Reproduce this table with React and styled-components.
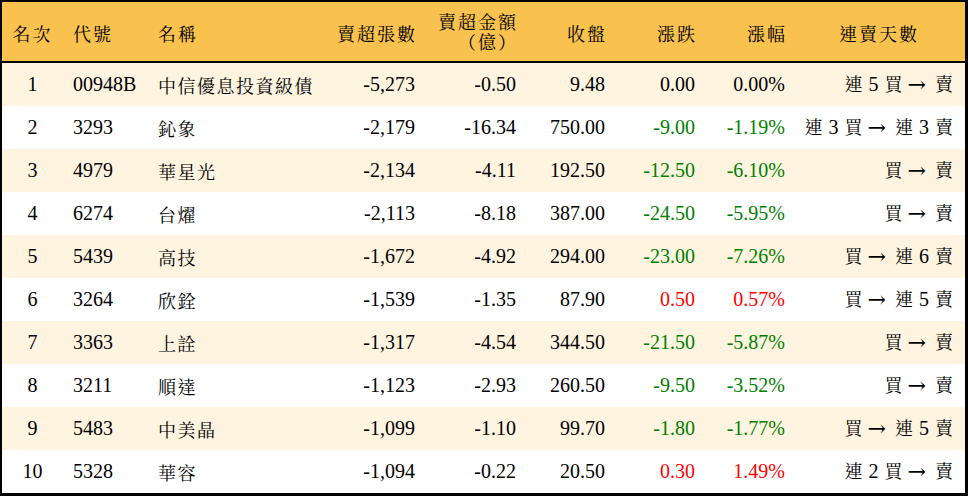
import React from "react";
import styled, { createGlobalStyle } from "styled-components";

const GlobalStyle = createGlobalStyle`
  html, body { margin: 0; padding: 0; background: #ffffff; }
  body {
    font-family: "Liberation Serif", "Noto Serif CJK TC", "Noto Sans CJK TC", serif;
    color: #000;
  }
`;

const COLS = "61px 85px 170px 107px 101px 89px 90px 90px 170px";

const Table = styled.div`
  width: 968px;
  height: 496px;
  box-sizing: border-box;
  border-style: solid;
  border-color: #000;
  border-width: 2px 3px 3px 2px;
  display: flex;
  flex-direction: column;
`;

const HeaderRow = styled.div`
  display: grid;
  grid-template-columns: ${COLS};
  height: 61px;
  box-sizing: border-box;
  background: #f9c14d;
  border-bottom: 2px solid #000;
`;

const Row = styled.div`
  display: grid;
  grid-template-columns: ${COLS};
  height: 43px;
  background: ${(p) => (p.$striped ? "#fef4e0" : "#ffffff")};
`;

const Cell = styled.div`
  display: flex;
  align-items: center;
  justify-content: ${(p) =>
    p.$align === "center" ? "center" : p.$align === "left" ? "flex-start" : "flex-end"};
  padding: 0 ${(p) => (p.$last ? "12px" : "10px")} 0 10px;
  font-size: 20px;
  white-space: nowrap;
  color: ${(p) => (p.$tone === "up" ? "#ff0000" : p.$tone === "down" ? "#008000" : "#000")};
`;

const HeadCell = styled(Cell)`
  padding-top: 3px;
`;

const HeadStack = styled.div`
  display: flex;
  flex-direction: column;
  align-items: flex-end;
  line-height: 20px;
`;

const HeadText = styled.span`
  font-size: 18px;
  letter-spacing: 2px;
  margin-right: ${(p) => (p.$trim ? "-2px" : "0")};
`;

const NameText = styled.span`
  font-size: 18px;
  letter-spacing: 1.5px;
`;

const Seq = styled.span`
  display: inline-flex;
  align-items: center;
  white-space: pre;
  word-spacing: 1px;
`;

const SeqCjk = styled.span`
  font-size: 18px;
  line-height: 1;
`;

const SeqArrow = styled.span`
  font-family: "DejaVu Serif", serif;
  font-size: 22px;
  line-height: 1;
  margin: 0 3px 0 -1px;
`;

const rows = [
  ["1", "00948B", "中信優息投資級債", "-5,273", "-0.50", "9.48", "0.00", "0.00%", "連 5 買 → 賣"],
  ["2", "3293", "鈊象", "-2,179", "-16.34", "750.00", "-9.00", "-1.19%", "連 3 買 → 連 3 賣"],
  ["3", "4979", "華星光", "-2,134", "-4.11", "192.50", "-12.50", "-6.10%", "買 → 賣"],
  ["4", "6274", "台燿", "-2,113", "-8.18", "387.00", "-24.50", "-5.95%", "買 → 賣"],
  ["5", "5439", "高技", "-1,672", "-4.92", "294.00", "-23.00", "-7.26%", "買 → 連 6 賣"],
  ["6", "3264", "欣銓", "-1,539", "-1.35", "87.90", "0.50", "0.57%", "買 → 連 5 賣"],
  ["7", "3363", "上詮", "-1,317", "-4.54", "344.50", "-21.50", "-5.87%", "買 → 賣"],
  ["8", "3211", "順達", "-1,123", "-2.93", "260.50", "-9.50", "-3.52%", "買 → 賣"],
  ["9", "5483", "中美晶", "-1,099", "-1.10", "99.70", "-1.80", "-1.77%", "買 → 連 5 賣"],
  ["10", "5328", "華容", "-1,094", "-0.22", "20.50", "0.30", "1.49%", "連 2 買 → 賣"],
];

const toneOf = (v) => {
  const n = parseFloat(v);
  if (n > 0) return "up";
  if (n < 0) return "down";
  return "flat";
};

function Streak({ text }) {
  const parts = text.split(/(→|[\u4e00-\u9fff]+)/).filter((s) => s !== "");
  return (
    <Seq>
      {parts.map((p, i) => {
        if (p === "→") return <SeqArrow key={i}>→</SeqArrow>;
        if (/[\u4e00-\u9fff]/.test(p)) return <SeqCjk key={i}>{p}</SeqCjk>;
        return <span key={i}>{p}</span>;
      })}
    </Seq>
  );
}

export default function App() {
  return (
    <>
      <GlobalStyle />
      <Table>
        <HeaderRow>
          <HeadCell $align="center"><HeadText>名次</HeadText></HeadCell>
          <HeadCell $align="left"><HeadText>代號</HeadText></HeadCell>
          <HeadCell $align="left"><HeadText>名稱</HeadText></HeadCell>
          <HeadCell><HeadText $trim>賣超張數</HeadText></HeadCell>
          <HeadCell>
            <HeadStack>
              <HeadText $trim>賣超金額</HeadText>
              <HeadText $trim>（億）</HeadText>
            </HeadStack>
          </HeadCell>
          <HeadCell><HeadText $trim>收盤</HeadText></HeadCell>
          <HeadCell><HeadText $trim>漲跌</HeadText></HeadCell>
          <HeadCell><HeadText $trim>漲幅</HeadText></HeadCell>
          <HeadCell $align="center" $last><HeadText>連賣天數</HeadText></HeadCell>
        </HeaderRow>
        {rows.map((r, i) => (
          <Row key={r[0]} $striped={i % 2 === 0}>
            <Cell $align="center">{r[0]}</Cell>
            <Cell $align="left">{r[1]}</Cell>
            <Cell $align="left"><NameText>{r[2]}</NameText></Cell>
            <Cell>{r[3]}</Cell>
            <Cell>{r[4]}</Cell>
            <Cell>{r[5]}</Cell>
            <Cell $tone={toneOf(r[6])}>{r[6]}</Cell>
            <Cell $tone={toneOf(r[7])}>{r[7]}</Cell>
            <Cell $last><Streak text={r[8]} /></Cell>
          </Row>
        ))}
      </Table>
    </>
  );
}
